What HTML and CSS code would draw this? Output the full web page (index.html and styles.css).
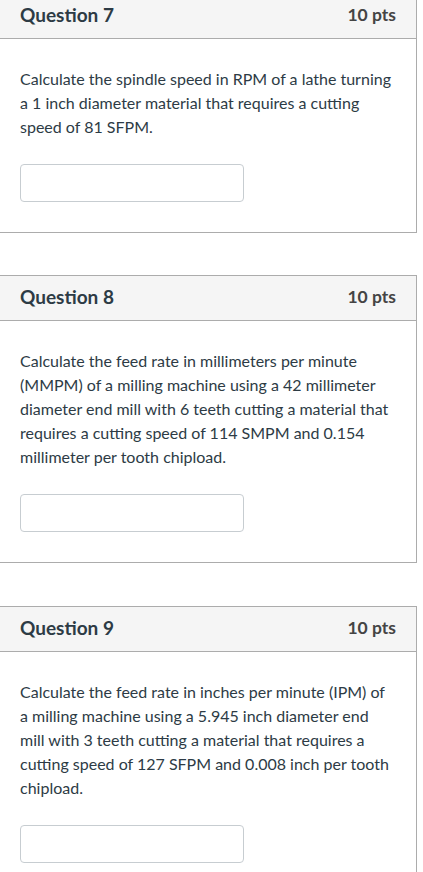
FILE: index.html
```html
<!DOCTYPE html>
<html lang="en">
<head>
<meta charset="utf-8">
<title>Quiz</title>
<link rel="stylesheet" href="styles.css">
</head>
<body>
<main class="quiz">
  <section class="question">
    <header class="q-header">
      <h2 class="q-title">Question 7</h2>
      <span class="q-points">10 pts</span>
    </header>
    <div class="q-body">
      <p class="q-text">Calculate the spindle speed in RPM of a lathe turning a 1 inch diameter material that requires a cutting speed of 81 SFPM.</p>
      <input class="q-input" type="text" aria-label="Answer for question 7">
    </div>
  </section>
  <section class="question">
    <header class="q-header">
      <h2 class="q-title">Question 8</h2>
      <span class="q-points">10 pts</span>
    </header>
    <div class="q-body">
      <p class="q-text">Calculate the feed rate in millimeters per minute (MMPM) of a milling machine using a 42 millimeter diameter end mill with 6 teeth cutting a material that requires a cutting speed of 114 SMPM and 0.154 millimeter per tooth chipload.</p>
      <input class="q-input" type="text" aria-label="Answer for question 8">
    </div>
  </section>
  <section class="question">
    <header class="q-header">
      <h2 class="q-title">Question 9</h2>
      <span class="q-points">10 pts</span>
    </header>
    <div class="q-body">
      <p class="q-text">Calculate the feed rate in inches per minute (IPM) of a milling machine using a 5.945 inch diameter end mill with 3 teeth cutting a material that requires a cutting speed of 127 SFPM and 0.008 inch per tooth chipload.</p>
      <input class="q-input" type="text" aria-label="Answer for question 9">
    </div>
  </section>
</main>
</body>
</html>
```
FILE: styles.css
```css
html, body {
  margin: 0;
  padding: 0;
  background: #ffffff;
}

body {
  font-family: Lato, "Open Sans", "Liberation Sans", sans-serif;
  color: #2d3b45;
  overflow: hidden;
}

.quiz {
  width: 418px;
  margin: -7px 0 0 -1px;
  display: flex;
  flex-direction: column;
  gap: 42px;
}

.question {
  border: 1px solid #acacac;
  background: #fff;
}

.question + .question + .question {
  margin-top: 1px;
}

.q-header {
  box-sizing: border-box;
  height: 45px;
  padding: 0 20px 3px;
  display: flex;
  align-items: center;
  justify-content: space-between;
  background: #f5f5f5;
  border-bottom: 1px solid #acacac;
}

.q-title {
  margin: 0;
  font-size: 19px;
  font-weight: 700;
  color: #2d3b45;
}

.q-points {
  font-size: 17.5px;
  font-weight: 700;
  color: #444444;
}

.q-body {
  padding: 28px 20px 30px;
}

.q-text {
  margin: 0 0 25px;
  font-size: 16px;
  line-height: 24px;
}

.q-input {
  display: block;
  box-sizing: border-box;
  width: 224px;
  height: 38px;
  margin: 0;
  border: 1px solid #c7cdd1;
  border-radius: 4px;
  background: #fff;
  font: inherit;
}
```
